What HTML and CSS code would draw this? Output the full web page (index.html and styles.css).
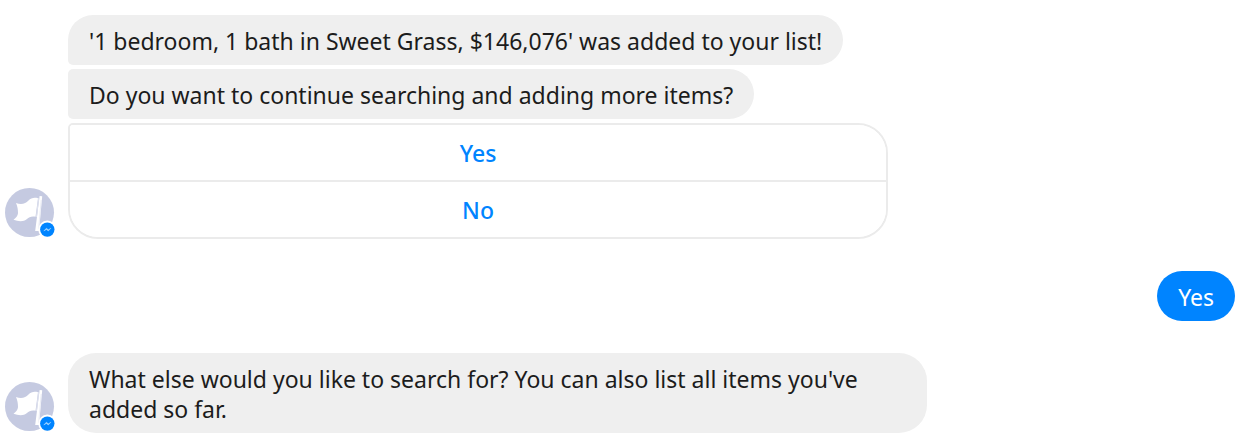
FILE: index.html
```html
<!DOCTYPE html>
<html lang="en">
<head>
<meta charset="utf-8">
<meta name="viewport" content="width=device-width, initial-scale=1">
<title>Chat</title>
<link rel="stylesheet" href="styles.css">
</head>
<body>
<svg class="symbols" aria-hidden="true">
  <symbol id="flag-avatar" viewBox="0 0 50 50">
    <circle cx="24.500" cy="24.500" r="24.500" fill="#c5cae1"/>
    <path d="M11 15c5 2 9.500 1 12.500-2.500 2.500-2.800 6-3.200 9.500-2.300l-2.500 18.500c-4-1-6.500.5-8.500 2.300-3.500 3-8.500 2.500-13.500.8 2.500-2 4.300-4 4.500-6.500 0-4-.5-7-2-10.300z" fill="#fff"/>
    <path d="M34.600 8 37.200 8.300 34 43h-3.800z" fill="#fff"/>
    <path d="m33.700 10-2.300 19" stroke="#dfe2ef" stroke-width="1" fill="none"/>
    <path d="m36.200 12-2.600 29" stroke="#e6e8f2" stroke-width=".8" fill="none"/>
    <circle cx="42.300" cy="41.600" r="9" fill="#fff"/>
    <circle cx="42.300" cy="41.600" r="7.200" fill="#0084ff"/>
    <path d="m38.800 43 2.600-2.800 1.900 1.600 2.600-1.600-2.600 2.800-1.900-1.600z" fill="#a9d6ff" stroke="#a9d6ff" stroke-width=".5"/>
  </symbol>
</svg>
<main class="chat">
  <section class="turn">
    <svg class="avatar" role="img" aria-label="Bot"><use href="#flag-avatar"/></svg>
    <div class="stack">
      <p class="bubble bubble-first">'1 bedroom, 1 bath in Sweet Grass, $146,076' was added to your list!</p>
      <p class="bubble bubble-middle">Do you want to continue searching and adding more items?</p>
      <div class="options">
        <button class="option" type="button">Yes</button>
        <button class="option" type="button">No</button>
      </div>
    </div>
  </section>
  <section class="turn turn-own">
    <p class="bubble bubble-own">Yes</p>
  </section>
  <section class="turn">
    <svg class="avatar" role="img" aria-label="Bot"><use href="#flag-avatar"/></svg>
    <div class="stack">
      <p class="bubble">What else would you like to search for? You can also list all items you've added so far.</p>
    </div>
  </section>
</main>
</body>
</html>
```
FILE: styles.css
```css
* {
  box-sizing: border-box;
}

body {
  margin: 0;
  background: #fff;
  color: #1c1c1c;
  font: 23px/30px "Noto Sans", "Open Sans", sans-serif;
}

.symbols {
  position: absolute;
  width: 0;
  height: 0;
}

.chat {
  display: flex;
  flex-direction: column;
  gap: 32px;
  padding: 15px 5px 12px;
}

.turn {
  display: flex;
  align-items: flex-end;
  gap: 13px;
}

.turn-own {
  justify-content: flex-end;
}

.avatar {
  flex: none;
  width: 50px;
  height: 50px;
  margin-bottom: 1px;
}

.stack {
  flex: 1;
  min-width: 0;
  display: flex;
  flex-direction: column;
  align-items: flex-start;
  gap: 4px;
}

.bubble {
  max-width: 859px;
  margin: 0;
  padding: 11px 21px 9px;
  border-radius: 28px;
  background: #efefef;
}

.bubble-first {
  border-radius: 25px 25px 25px 5px;
}

.bubble-middle {
  border-radius: 5px 25px 25px 5px;
}

.bubble-own {
  border-radius: 25px;
  background: #0084ff;
  color: #fff;
}

.options {
  width: 100%;
  max-width: 820px;
  overflow: hidden;
  border: 2px solid #ebebeb;
  border-radius: 5px 30px 30px 30px;
}

.option {
  display: block;
  width: 100%;
  padding: 13px 21px 12px;
  border: 0;
  background: #fff;
  color: #0084ff;
  font: inherit;
  font-weight: 500;
}

.option + .option {
  border-top: 2px solid #ebebeb;
}
```
